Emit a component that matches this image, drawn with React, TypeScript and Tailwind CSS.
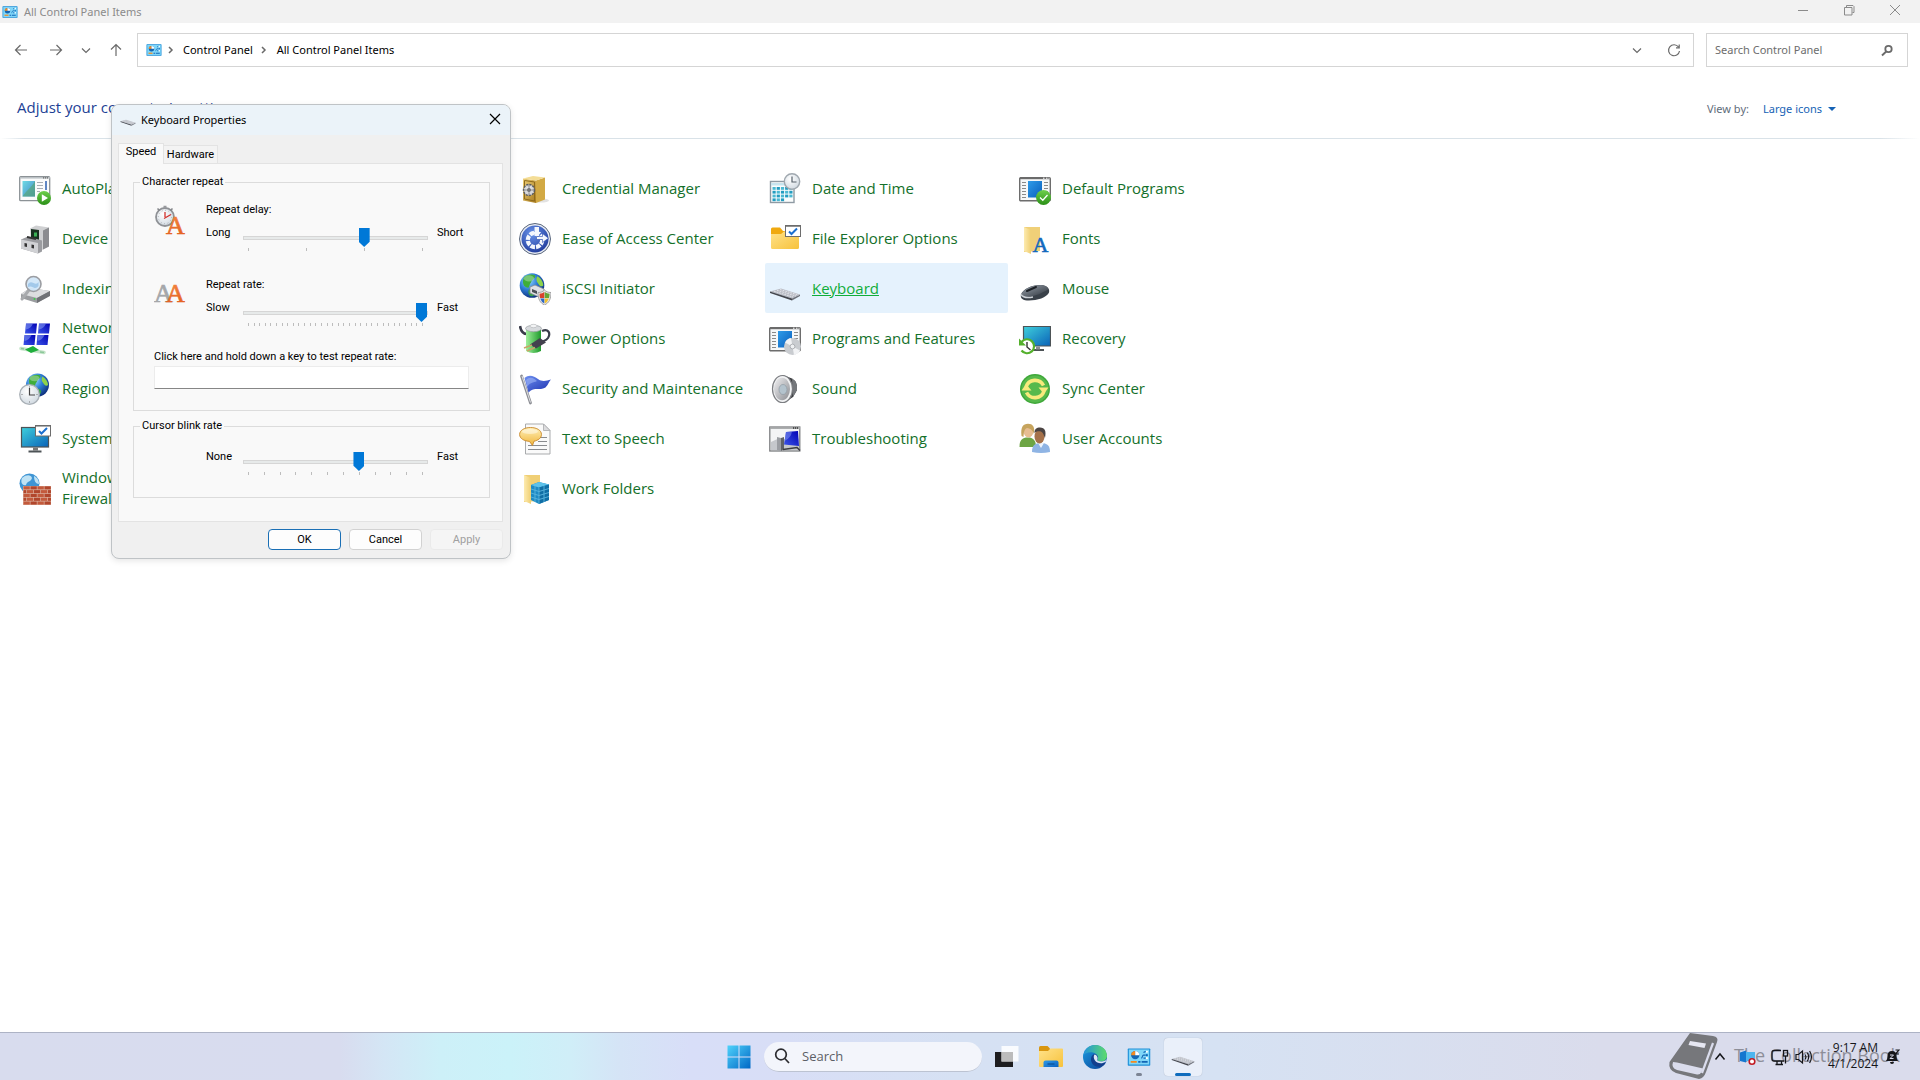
import React, { useState } from "react";

const UI = "font-['Open_Sans','Noto_Sans',sans-serif]";
const SMALL = "font-['Noto_Sans','Open_Sans',sans-serif] text-[11px] leading-4";
const DLG = "font-[Roboto,'Liberation_Sans',sans-serif]";

/* ---------- shared gradients ---------- */

function Gradients() {
  const linear: [string, string, string, string, string, string, string][] = [
    ["gScreen", "0", "0", "1", "1", "#3fd0dc", "#0a62b8"],
    ["gBlueWin", "0", "0", "1", "1", "#2f9be8", "#0a5fbe"],
    ["gGreen", "0", "0", "0", "1", "#6fd04c", "#2a8f17"],
    ["gFolder", "0", "0", "1", "1", "#ffe28a", "#f7c23c"],
    ["gPale", "0", "0", "1", "0", "#fdebb0", "#efcf74"],
    ["gFlag", "0", "0", "1", "1", "#6d8ff0", "#1a2fae"],
    ["gMon", "0", "1", "1", "0", "#3b55e8", "#0000b4"],
    ["gGray", "0", "0", "1", "1", "#f0f0f2", "#8c8d92"],
    ["gDark", "0", "0", "1", "1", "#9ba4ae", "#2d333b"],
    ["gGold", "0", "0", "1", "1", "#eed07a", "#a87a1c"],
    ["gBattery", "0", "0", "1", "0", "#9ff09a", "#1f9a2c"],
    ["gStart", "0", "0", "1", "1", "#4fd2fb", "#0067c5"],
    ["gEdgeA", "0", "0", "1", "0", "#2393dc", "#5ddc6a"],
    ["gEdgeB", "0", "0", "1", "1", "#1b9de2", "#0b3f94"],
    ["gBubble", "0", "0", "0", "1", "#fff0b8", "#f0b53a"],
    ["gOrange", "0", "0", "0", "1", "#f58a45", "#e0591a"],
  ];
  return (
    <svg width="0" height="0" className="absolute" aria-hidden="true">
      <defs>
        {linear.map(([id, x1, y1, x2, y2, a, b]) => (
          <linearGradient key={id} id={id} x1={x1} y1={y1} x2={x2} y2={y2}>
            <stop offset="0" stopColor={a} />
            <stop offset="1" stopColor={b} />
          </linearGradient>
        ))}
        <radialGradient id="gGlobe" cx=".35" cy=".3" r=".8">
          <stop offset="0" stopColor="#9fe0ff" />
          <stop offset=".45" stopColor="#2f7fd8" />
          <stop offset="1" stopColor="#08246e" />
        </radialGradient>
        <radialGradient id="gEase" cx=".4" cy=".3" r=".8">
          <stop offset="0" stopColor="#6a94ea" />
          <stop offset="1" stopColor="#1b3596" />
        </radialGradient>
        <radialGradient id="gClock" cx=".4" cy=".35" r=".7">
          <stop offset="0" stopColor="#ffffff" />
          <stop offset="1" stopColor="#cfd8e0" />
        </radialGradient>
      </defs>
    </svg>
  );
}

function Icon({ children }: { children: React.ReactNode }) {
  return (
    <svg viewBox="0 0 32 32" className="mt-0.5 size-8 shrink-0" aria-hidden="true">
      {children}
    </svg>
  );
}

function Globe({ cx, cy, r }: { cx: number; cy: number; r: number }) {
  return (
    <g transform={`translate(${cx} ${cy}) scale(${r / 12})`}>
      <circle r="12" fill="url(#gGlobe)" />
      <path d="M-8 -8 C-5 -11 0 -11.500 3 -10 C4 -7 0 -6 -1 -3 C-3 -1 -2 3 -5 2 C-8 1 -10 -2 -8 -8Z" fill="#3fae3a" />
      <path d="M5 -9 C9 -7 11 -3 11 0 C9 2 7 0 6 -2 C4 -4 4 -7 5 -9Z" fill="#8ed24a" />
      <path d="M-3 4 C0 3 4 4 4 7 C3 10 0 11 -2 10 C-4 8 -4 6 -3 4Z" fill="#36a04a" />
      <ellipse cx="-3" cy="-7" rx="5" ry="3" fill="#fff" opacity=".3" />
    </g>
  );
}

function ProgramWindow() {
  return (
    <g>
      <rect x=".7" y="4.700" width="30.600" height="23" rx="1" fill="#f6f7f8" stroke="#6d6d6d" strokeWidth="1.400" />
      <path d="M1 5.200H31" stroke="#6b6b6b" strokeWidth="2" />
      <path d="M24 5.200h1.500M27 5.200h1.500M29.500 5.200h1" stroke="#fff" strokeWidth="1" />
      <path d="M3 9.500h4M3 12.500h4M3 15.500h4M3 18.500h4M3 21.500h4M3 24.500h4M25 9.500h4M25 12.500h4M25 15.500h4M25 18.500h4" stroke="#8a8a8a" strokeWidth="1.100" />
      <rect x="9" y="8" width="14" height="16.500" fill="url(#gBlueWin)" />
    </g>
  );
}

const keyboardShape = (
  <g transform="translate(0 1)">
    <path d="M1 17.500 L12 14.500 L31 20.500 L23 24.500 Z" fill="#b9bcc4" />
    <path d="M1 17.500 L23 24.500 L23 26.500 L1 19Z" fill="#44464d" />
    <path d="M23 24.500 L31 20.500 L31 22 L23 26.500Z" fill="#6f727a" />
    <path d="M5 17.200L24 23M8 16.300L27 22M11 15.500L29.500 21" stroke="#e6e8ed" strokeWidth=".9" strokeDasharray="1.800 .9" />
  </g>
);

const controlPanelShape = (
  <g>
    <rect x="1" y="4.500" width="30" height="23" rx="1" fill="#1e8fd8" />
    <rect x="2.500" y="6" width="27" height="20" fill="#7fd6f8" />
    <circle cx="11" cy="13.500" r="5.500" fill="#1266b5" />
    <path d="M11 13.500V8a5.500 5.500 0 0 0-5.500 5.500Z" fill="#f58b1f" />
    <path d="M11 13.500V8a5.500 5.500 0 0 1 5.500 5.500Z" fill="#fff" />
    <path d="M19 17.500c2 0 1-4 3-4M22 10l3-1.500M22 13.500h3M22 17.500h3" stroke="#1266b5" strokeWidth="1.500" fill="none" />
    <circle cx="26.500" cy="9" r="1.400" fill="#fff" />
    <circle cx="26.500" cy="13.500" r="1.400" fill="#1266b5" />
    <circle cx="26.500" cy="17.500" r="1.400" fill="#fff" />
    <path d="M5 22.500h8" stroke="#f58b1f" strokeWidth="2.400" />
    <path d="M15 22.500h3M19.500 22.500h8" stroke="#1266b5" strokeWidth="2.400" />
  </g>
);

const icons: Record<string, React.ReactNode> = {
  AutoPlay: (
    <g transform="translate(0 3)">
      <rect x=".7" y=".7" width="30" height="24" rx="1" fill="#fafbfb" stroke="#8c9296" strokeWidth="1.300" />
      <path d="M1 1.800h30" stroke="#b9bfc3" strokeWidth="1.500" />
      <path d="M24 1.800h5" stroke="#666" strokeDasharray="1.200 .8" strokeWidth="1.300" />
      <rect x="3.500" y="5" width="12.500" height="15.500" fill="url(#gScreen)" opacity=".75" />
      <path d="M3.500 20.500 C8 14 12 12 16 5V20.500Z" fill="#57a77b" opacity=".7" />
      <path d="M18 6.500h6M18 9.500h6M18 12.500h6M18 15.500h3" stroke="#a7adb2" strokeWidth="1.100" />
      <path d="M27 5v9" stroke="#2b5fb0" strokeWidth="1.500" />
      <circle cx="25" cy="22" r="7" fill="url(#gGreen)" />
      <path d="M22.800 18.200L29 22L22.800 25.800Z" fill="#fff" />
    </g>
  ),
  Device: (
    <g transform="translate(0 1.500)">
      <path d="M11 4L17 1L30 3V22L22 26L12 15Z" fill="#cfd0d2" />
      <path d="M24 6L30 3V22L24 25Z" fill="#8b8c90" />
      <path d="M12 4.500L20 5.500V15.500L12 14Z" fill="#17301f" />
      <path d="M15 8h3v4h-3z" fill="#38b254" />
      <path d="M2 15L9 12L23 16V27L19 29L2 24Z" fill="#9b9ca0" />
      <path d="M2 15L19 18.500V29L2 24Z" fill="#d0d1d4" />
      <path d="M8 12.500L17 14.500" stroke="#333" strokeWidth="2" />
      <path d="M5.500 18.500v3.500l2.500 .6v-3.500zM12.500 20v3.500l2.500 .6v-3.500z" fill="#333" />
    </g>
  ),
  Indexing: (
    <g transform="translate(0 2)">
      <path d="M2 19L11 13L31 16L30 21L18 28L2 23Z" fill="#9a9c9f" />
      <path d="M2 19L11 13L31 16L18 23Z" fill="#dcdddf" />
      <path d="M18 23L31 16V21L18 28Z" fill="#707276" />
      <circle cx="15.500" cy="24" r="1" fill="#38d048" />
      <path d="M10 15L3 24" stroke="#a8aaad" strokeWidth="3" strokeLinecap="round" />
      <circle cx="14.500" cy="9" r="7.500" fill="#cfe6f8" fillOpacity=".9" stroke="#9b9da2" strokeWidth="1.600" />
      <path d="M9 9q2-3 5.500-1t5-1v4q-2 3-5 1.500T9 12Z" fill="#8ebce4" opacity=".7" />
    </g>
  ),
  Network: (
    <g transform="translate(0 .5)">
      {[[6, 0], [19, 0], [4.5, 11.5], [17.5, 11.5]].map(([x, y]) => (
        <g key={`${x}-${y}`}>
          <path d={`M${x + 1} ${y}h11l-1 10h-11z`} fill="url(#gMon)" />
          <path d={`M${x + 1} ${y + 6}q5-1 7-6h-7z`} fill="#8aa0f4" opacity=".55" />
        </g>
      ))}
      <path d="M2 25L25 29" stroke="#c4e4c8" strokeWidth="3.500" strokeLinecap="round" />
      <path d="M6 26L14 22.500L20 26.500L12 29.500Z" fill="#1fae3c" />
      <path d="M2 25l3 .6M21 28.400l4 .7" stroke="#8cc79a" strokeWidth="1.500" />
    </g>
  ),
  Region: (
    <g>
      <Globe cx={18.5} cy={12} r={11.5} />
      <circle cx="10.500" cy="21.500" r="9.800" fill="url(#gClock)" stroke="#a9b0b6" strokeWidth="1.300" />
      <path d="M10.500 15V22H16" stroke="#444" strokeWidth="1.200" fill="none" />
      <path d="M10.500 13.500v1M10.500 28.500v1M2.500 21.500h1M17.500 21.500h1" stroke="#777" />
    </g>
  ),
  System: (
    <g>
      <rect x="2.500" y="4.500" width="27" height="19.500" fill="url(#gScreen)" stroke="#4d5356" strokeWidth="1.200" />
      <path d="M14 24.500h5v3h-5z" fill="#777" />
      <path d="M9.500 28.500h13" stroke="#4d5356" strokeWidth="2" />
      <rect x="16.500" y="2.500" width="15" height="10.500" fill="#fff" stroke="#6d6d6d" />
      <path d="M16 2.800h16" stroke="#6d6d6d" strokeWidth="1.500" />
      <path d="M20 8L22.500 10.500L28 5" stroke="#1b6fd0" strokeWidth="2" fill="none" />
    </g>
  ),
  Firewall: (
    <g>
      <circle cx="10.500" cy="10.500" r="10" fill="#3f95d4" />
      <path d="M3 5C8 1 12 2 13 5C12 9 8 8 7 12C4 13 1 10 3 5ZM15 3C19 5 20 8 20 11C17 11 15 8 15 3Z" fill="#bfe2f4" />
      <rect x="4" y="13" width="28" height="19" fill="#ddb2a0" />
      {[0, 1, 2, 3, 4].map((r) =>
        [0, 1, 2, 3, 4].map((c) => {
          const x = 4.5 + c * 7 - (r % 2) * 3.5;
          const a = Math.max(4.5, x);
          const b = Math.min(32, x + 6.3);
          return b > a ? <rect key={`${r}${c}`} x={a} y={13.3 + r * 3.8} width={b - a} height="3.100" fill={(r + c) % 2 ? "#b1462c" : "#c35a3c"} /> : null;
        }),
      )}
    </g>
  ),
  Credential: (
    <g transform="translate(0 2.500)">
      <ellipse cx="22" cy="25" rx="8" ry="2" fill="#e2e2e2" />
      <path d="M4 3L17 5V27.500L4 25Z" fill="url(#gGold)" />
      <path d="M17 5L26 2V24L17 27.500Z" fill="#d2a944" />
      <path d="M4 3L14 .5L26 2L17 5Z" fill="#f4dd96" />
      <path d="M5.500 5L15.500 6.500V25.500L5.500 23.500Z" fill="none" stroke="#8e6a1c" />
      <circle cx="10" cy="14.500" r="5.500" fill="#d7d8dc" stroke="#595b60" strokeWidth="1.400" strokeDasharray="2.200 1" />
      <circle cx="10" cy="14.500" r="2.600" fill="#77797f" stroke="#fff" strokeWidth=".8" />
      <path d="M10 9v11M4.500 14.500h11" stroke="#777" strokeWidth=".8" />
    </g>
  ),
  Ease: (
    <g>
      <circle cx="16" cy="16" r="15.500" fill="#e8ecf4" stroke="#59667c" strokeWidth="1" />
      <circle cx="16" cy="16" r="13.500" fill="url(#gEase)" />
      <circle cx="16" cy="17" r="7.200" fill="none" stroke="#f4f7fd" strokeWidth="4.200" strokeDasharray="4.500 1.150" />
      <path d="M15.500 4h4.500v9h-4.500z" fill="#f4f7fd" />
      <path d="M13.500 9L17.800 14L22 9Z" fill="#f4f7fd" />
      <path d="M17.500 13.500h6v-3l6 4.700-6 4.300v-3h-6z" fill="#f4f7fd" stroke="#2c4db0" strokeWidth=".6" />
    </g>
  ),
  iSCSI: (
    <g>
      <Globe cx={13} cy={12.5} r={12.3} />
      <path d="M11 14L16 12L25 16V23L20 24L11 20Z" fill="#dfe1e5" stroke="#888b92" strokeWidth=".8" />
      <path d="M13 16l5 2v3l-5-2z" fill="#4c5058" />
      <path d="M19 19.500C22 19.500 24 18.500 25.500 17C27 18.500 29 19.500 32 19.500C32 26 30 30 25.500 32C21 30 19 26 19 19.500Z" fill="#e8e8ea" stroke="#888" strokeWidth=".7" />
      <path d="M20.500 20.800Q23.500 20.500 25.300 19V25H21Q20.500 23 20.500 20.800Z" fill="#d9422c" />
      <path d="M25.700 19Q28 20.700 30.600 20.800Q30.500 23 30 25H25.700Z" fill="#63a636" />
      <path d="M21.200 25.400H25.300V30.500Q22.500 29 21.200 25.400Z" fill="#2e67c6" />
      <path d="M25.700 25.400H29.900Q28.500 29 25.700 30.500Z" fill="#f1c02c" />
    </g>
  ),
  Power: (
    <g>
      <path d="M1 3C2 9 4 11 8 11" stroke="#3a3d4a" strokeWidth="2.600" fill="none" />
      <path d="M23 8C29 5 32 10 29 15C27 18 23 18 21 20" stroke="#3a3d4a" strokeWidth="2.200" fill="none" />
      <path d="M7 6Q14.500 10 22 6V28Q14.500 32 7 28Z" fill="url(#gBattery)" />
      <ellipse cx="14.500" cy="5.500" rx="8" ry="3.200" fill="#d7dadd" stroke="#9a9da2" strokeWidth=".7" />
      <ellipse cx="14.500" cy="3" rx="3.500" ry="1.700" fill="#f3f4f5" stroke="#a5a7ab" strokeWidth=".5" />
      <path d="M11 21.500L21 15L27 19.500L17 25.500Z" fill="#43414e" />
      <path d="M13 22L5 25M16 24.500L8 28" stroke="#c9a468" strokeWidth="1.700" />
    </g>
  ),
  Security: (
    <g>
      <path d="M2.500 3L11.500 30" stroke="#8b8d93" strokeWidth="2.800" strokeLinecap="round" />
      <path d="M3 3L11.500 29.500" stroke="#e0e1e4" strokeWidth="1" />
      <path d="M5.500 5C10 1 15 3 19 6C23 9 27 8 32 6.500C29 10 28 15 24 15.500C19 17 15 14 9.500 19.500Z" fill="url(#gFlag)" />
      <path d="M7 7C11 3 15 5 18 8C14 10 11 9 8 14Z" fill="#a6bbf8" opacity=".55" />
    </g>
  ),
  Speech: (
    <g>
      <path d="M6.500 1H24.500L31 7.500V31H6.500Z" fill="#fafafa" stroke="#a9abad" strokeWidth="1" />
      <path d="M24.500 1V7.500H31Z" fill="#dcdcde" stroke="#a9abad" strokeWidth=".8" />
      <path d="M19 14.500h9M19 18.500h9M9 22.500h19M9 26.500h19" stroke="#8a8c8f" strokeWidth="1.100" />
      <path d="M11.500 4.500C18 4.500 22.500 7.500 22.500 11.500C22.500 15 19 17.500 15 18.200L13.500 22.500L10.500 18.400C5 18 .6 15.500 .6 11.500C.6 7.500 5 4.500 11.500 4.500Z" fill="url(#gBubble)" stroke="#c8882a" strokeWidth=".9" />
      <ellipse cx="11" cy="8.500" rx="8" ry="2.500" fill="#fff" opacity=".45" />
    </g>
  ),
  Work: (
    <g>
      <path d="M5 2H21V28L5 29Z" fill="#f0cf75" />
      <path d="M5 2L12 5V31L5 28Z" fill="url(#gPale)" />
      <path d="M12 12L20 9L30 11.500V27L20 31L12 27Z" fill="#1d8ac4" />
      <path d="M12 12L20 9L30 11.500L20 14.500Z" fill="#5cc1ea" />
      <path d="M20 14.500L30 11.500V27L20 31Z" fill="#106ea5" />
      <path d="M12 16l8 2.500l10-3M12 20l8 2.500l10-3M12 24l8 2.500l10-3M16 13v16M25 13v16M20 14.500V31" stroke="#5ab4de" strokeWidth=".9" fill="none" />
    </g>
  ),
  Date: (
    <g>
      <rect x="1.500" y="8.500" width="23.500" height="21" fill="#fbfdfd" stroke="#8f9aa3" strokeWidth="1.400" />
      <path d="M2 10h22.500v2.500h-22.500z" fill="#c8e4ee" />
      {[0, 1, 2, 3].map((r) =>
        [0, 1, 2, 3, 4].map((c) =>
          r === 3 && c > 2 ? null : <rect key={`${r}${c}`} x={3.5 + c * 4.2} y={14 + r * 3.8} width="3.200" height="2.800" fill={(r + c) % 2 ? "#239cc0" : "#4bb9d3"} />,
        ),
      )}
      <circle cx="23" cy="8.500" r="7.700" fill="url(#gClock)" stroke="#a0a8af" strokeWidth="1.400" />
      <path d="M23 3.500V9H27.500" stroke="#56606a" strokeWidth="1.200" fill="none" />
    </g>
  ),
  Folder: (
    <g>
      <path d="M2 6Q2 4.500 3.500 4.500H11L14 8H30V14H2Z" fill="#f0a90f" />
      <path d="M2 11H12L15 8.500H30V24.500Q30 26 28.500 26H3.500Q2 26 2 24.500Z" fill="url(#gFolder)" />
      <rect x="16.500" y="2.500" width="15" height="11" fill="#fff" stroke="#6d6d6d" />
      <path d="M16 3h16" stroke="#6d6d6d" strokeWidth="1.500" />
      <path d="M20 8.500L22.500 11L28 5.500" stroke="#1b6fd0" strokeWidth="2" fill="none" />
    </g>
  ),
  Keyboard: keyboardShape,
  Programs: (
    <g>
      <ProgramWindow />
      <circle cx="23.500" cy="23.500" r="8.500" fill="#c9ccd0" />
      <path d="M23.500 23.500L16 19.500A8.500 8.500 0 0 1 22 15.100ZM23.500 23.500L31 27.500A8.500 8.500 0 0 1 25 31.900Z" fill="#f2f3f5" />
      <circle cx="23.500" cy="23.500" r="2.400" fill="#eef0f2" stroke="#9fa2a7" strokeWidth=".8" />
    </g>
  ),
  Sound: (
    <g>
      <path d="M14 2L23 5.500Q29 9 28 17L24 24L15 30Z" fill="#3c3e41" />
      <path d="M23 5.500Q29 9 28 17L24 24Z" fill="#74777b" />
      <ellipse cx="13.500" cy="16" rx="10" ry="13.500" fill="#f1f2f3" stroke="#7c7e82" strokeWidth="1.200" />
      <ellipse cx="13" cy="16" rx="8" ry="11.300" fill="url(#gGray)" />
      <ellipse cx="14" cy="16.500" rx="4" ry="5" fill="#b4c3cd" stroke="#8f9ba4" strokeWidth=".7" />
    </g>
  ),
  Trouble: (
    <g transform="translate(0 1)">
      <rect x=".8" y="3" width="30" height="24" fill="#f3f4f5" stroke="#7c7e80" strokeWidth="1.300" />
      <path d="M1 4h30" stroke="#a4a6a8" strokeWidth="1.800" />
      <path d="M24 4h5" stroke="#333" strokeDasharray="1.200 .8" strokeWidth="1.300" />
      <path d="M2 18Q15 10 30 22V26H2Z" fill="#c5c8cc" />
      <path d="M8 13l4 1v13l-4-1z" fill="#9b9ea3" />
      <path d="M12 14l3-1v12l-3 2z" fill="#5f6267" />
      <path d="M17 8L29 7L30 22L15 20.500Z" fill="url(#gMon)" />
      <path d="M17 8L23 7.500Q22 14 15.500 17Z" fill="#8aa0f4" opacity=".5" />
      <path d="M14 25.500L28 23.500L31 26.500" stroke="#3b3d40" strokeWidth="1.500" fill="none" />
    </g>
  ),
  Default: (
    <g>
      <ProgramWindow />
      <circle cx="24.500" cy="24.500" r="7.500" fill="url(#gGreen)" />
      <path d="M21 24.500L23.800 27.200L28.500 22" stroke="#fff" strokeWidth="1.300" fill="none" />
    </g>
  ),
  Fonts: (
    <g>
      <path d="M5 4H21V28L5 29Z" fill="#f0d078" />
      <path d="M5 4L12 7V31L5 28Z" fill="url(#gPale)" />
      <text x="13.500" y="29" fontFamily="Liberation Serif, serif" fontWeight="400" fontSize="22" fill="#1369bd" stroke="#1369bd" strokeWidth=".6">A</text>
    </g>
  ),
  Mouse: (
    <g transform="translate(0 3.500)">
      <path d="M2 18C4 12 14 8 22 8.500C28 9 31 12 30 16C28 21 18 24 10 24C4 24 1 22 2 18Z" fill="#3a4149" />
      <path d="M3 16.500C6 11.500 14 8.500 22 8.500C27 9 29.500 11 29 13C24 16 16 20 10 20C5 20 2 19 3 16.500Z" fill="url(#gDark)" />
      <path d="M8 14.500L17 10.500" stroke="#1c2126" strokeWidth="2" strokeLinecap="round" />
      <path d="M2 18C4 21 9 21.500 14 20.500" stroke="#cdd2d8" strokeWidth="1.500" fill="none" />
    </g>
  ),
  Recovery: (
    <g transform="translate(0 2)">
      <path d="M4.500 1.500h27v19.500h-27z" fill="url(#gScreen)" stroke="#4d5356" strokeWidth="1.200" />
      <path d="M14 25h11" stroke="#4d5356" strokeWidth="2" />
      <path d="M17 21.500h4v3h-4z" fill="#8a8d90" />
      <circle cx="8" cy="21.500" r="7" fill="#fff" />
      <path d="M2.500 17A7 7 0 1 1 2.500 25.500" stroke="#54b02c" strokeWidth="2.200" fill="none" />
      <path d="M0 13.500V20.500H7Z" fill="#54b02c" />
      <path d="M8 17V22L11.500 25" stroke="#333" strokeWidth="1.400" fill="none" />
    </g>
  ),
  Sync: (
    <g>
      <circle cx="16" cy="16" r="15" fill="#3fa83a" />
      <circle cx="16" cy="16" r="13.500" fill="#56b94c" />
      <path d="M7 14A9.500 9.500 0 0 1 24.500 12.500" stroke="#f7ea7c" strokeWidth="3.600" fill="none" />
      <path d="M19.500 14.500H29.500L25 21Z" fill="#f7ea7c" />
      <path d="M25 18A9.500 9.500 0 0 1 7.500 19.500" stroke="#f7ea7c" strokeWidth="3.600" fill="none" />
      <path d="M12.500 17.500H2.500L7 11Z" fill="#f7ea7c" />
    </g>
  ),
  Users: (
    <g>
      <path d="M.5 24C.5 17 3 14.500 9 14.500C14 14.500 17 17 17 24Z" fill="#6da544" />
      <ellipse cx="9.500" cy="8.500" rx="4.800" ry="6" fill="#e7bd92" />
      <path d="M2.500 13C1.500 4 4 .8 9 .8C14 .8 16 4 15 11C14 8 12 5.500 8 5C5 6.500 5 9 4.500 14Z" fill="#c6a45e" />
      <path d="M13 29C13 22 16 20 22 20C28 20 31 22.500 31 29Q22 31 13 29Z" fill="#8fb4e4" />
      <path d="M19 20l3 5l3-5z" fill="#eef4fc" />
      <ellipse cx="20.500" cy="13.500" rx="5" ry="7" fill="#a5714a" />
      <path d="M15.500 10C15.500 6 17.500 4.500 21 4.500C26 4.500 27.500 8 26 15C25 13 24.500 10 22 8.500C19 8 17 8.500 15.500 10Z" fill="#4b4443" />
    </g>
  ),
};

/* ---------- control panel items ---------- */

type Item = { icon: string; label: string; hot?: boolean };
const columns: Item[][] = [
  [
    { icon: "AutoPlay", label: "AutoPlay" },
    { icon: "Device", label: "Device Manager" },
    { icon: "Indexing", label: "Indexing Options" },
    { icon: "Network", label: "Network and Sharing Center" },
    { icon: "Region", label: "Region" },
    { icon: "System", label: "System" },
    { icon: "Firewall", label: "Windows Defender Firewall" },
  ],
  [],
  [
    { icon: "Credential", label: "Credential Manager" },
    { icon: "Ease", label: "Ease of Access Center" },
    { icon: "iSCSI", label: "iSCSI Initiator" },
    { icon: "Power", label: "Power Options" },
    { icon: "Security", label: "Security and Maintenance" },
    { icon: "Speech", label: "Text to Speech" },
    { icon: "Work", label: "Work Folders" },
  ],
  [
    { icon: "Date", label: "Date and Time" },
    { icon: "Folder", label: "File Explorer Options" },
    { icon: "Keyboard", label: "Keyboard", hot: true },
    { icon: "Programs", label: "Programs and Features" },
    { icon: "Sound", label: "Sound" },
    { icon: "Trouble", label: "Troubleshooting" },
  ],
  [
    { icon: "Default", label: "Default Programs" },
    { icon: "Fonts", label: "Fonts" },
    { icon: "Mouse", label: "Mouse" },
    { icon: "Recovery", label: "Recovery" },
    { icon: "Sync", label: "Sync Center" },
    { icon: "Users", label: "User Accounts" },
  ],
];

function PanelItem({ icon, label, hot }: Item) {
  return (
    <li className={hot ? "mr-[7px] flex h-[50px] items-center gap-[11px] rounded-xs bg-[#e5f2fd] px-1" : "mr-[7px] flex h-[50px] items-center gap-[11px] px-1"}>
      <Icon>{icons[icon]}</Icon>
      <a href="#" className={hot ? "text-[15px] leading-[21px] text-[#10ad3a] underline" : "max-w-[186px] text-[15px] leading-[21px] text-[#14702a]"}>
        {label}
      </a>
    </li>
  );
}

/* ---------- window chrome ---------- */

function Stroke({ d, w = 1.2 }: { d: string; w?: number }) {
  return (
    <svg viewBox="0 0 16 16" className="size-4 shrink-0" fill="none" stroke="currentColor" strokeWidth={w} aria-hidden="true">
      <path d={d} />
    </svg>
  );
}

function ControlPanelGlyph({ large }: { large?: boolean }) {
  return (
    <svg viewBox="0 0 32 32" className={large ? "size-6 shrink-0" : "size-4 shrink-0"} aria-hidden="true">
      {controlPanelShape}
    </svg>
  );
}

function TitleBar() {
  return (
    <header className="flex h-[23px] items-center bg-[#f2f2f2] pr-0.5 pl-0.5 text-[#8b8b8b]">
      <ControlPanelGlyph />
      <h1 className={`ml-1.5 flex-1 ${SMALL}`}>All Control Panel Items</h1>
      <div className="flex h-5 items-start">
        <button aria-label="Minimize" className="grid w-[46px] place-items-center">
          <Stroke d="M3 8.500H13" w={1} />
        </button>
        <button aria-label="Restore" className="grid w-[46px] place-items-center">
          <Stroke d="M3.500 5.500h7.500v7.500h-7.500zM5.500 5V3.500h6.500l1 1V10.500h-1.500" w={1} />
        </button>
        <button aria-label="Close" className="grid w-[46px] place-items-center">
          <Stroke d="M3 3L13 13M13 3L3 13" w={1} />
        </button>
      </div>
    </header>
  );
}

function NavBar() {
  return (
    <div className="flex items-center pt-2.5 pr-3 pl-[13px] text-[#6a6a6a]">
      <nav aria-label="History" className="flex w-[124px] shrink-0 items-center">
        <button aria-label="Back" className="mr-[19px]">
          <Stroke d="M7.500 3L2.500 8L7.500 13M2.500 8H14" />
        </button>
        <button aria-label="Forward" className="mr-3.5">
          <Stroke d="M8.500 3L13.500 8L8.500 13M13.500 8H2" />
        </button>
        <button aria-label="Recent locations" className="mr-3.5">
          <Stroke d="M4 6.500L8 10.500L12 6.500" />
        </button>
        <button aria-label="Up">
          <Stroke d="M3 7.500L8 2.500L13 7.500M8 2.500V14" />
        </button>
      </nav>
      <div className="flex h-[34px] flex-1 items-center border border-[#d5d5d5] bg-white pr-[11px] pl-2">
        <ControlPanelGlyph />
        <ol className={`flex flex-1 items-center text-black ${SMALL}`}>
          <li className="flex items-center text-[#6a6a6a]"><Stroke d="M7 5L10 8L7 11" w={1.5} /></li>
          <li className="ml-[5px]"><a href="#">Control Panel</a></li>
          <li className="ml-0.5 flex text-[#6a6a6a]"><Stroke d="M7 5L10 8L7 11" w={1.5} /></li>
          <li className="ml-1.5"><a href="#">All Control Panel Items</a></li>
        </ol>
        <button aria-label="Previous locations" className="mr-[21px]">
          <Stroke d="M4 6.500L8 10.500L12 6.500" />
        </button>
        <button aria-label="Refresh">
          <Stroke d="M12.500 5A5.500 5.500 0 1 0 13.500 9M13.200 2.500V5.800H10" />
        </button>
      </div>
      <label className="ml-3 flex h-[34px] w-[202px] items-center border border-[#d5d5d5] bg-white pr-3 pl-2">
        <input aria-label="Search Control Panel" placeholder="Search Control Panel" className={`min-w-0 flex-1 outline-none placeholder:text-[#6d6d6d] ${SMALL}`} />
        <svg viewBox="0 0 16 16" className="size-4 shrink-0" fill="none" stroke="#6a6a6a" aria-hidden="true">
          <circle cx="9.500" cy="7" r="3.200" strokeWidth="1.800" />
          <path d="M7.200 9.500L3 13.500" strokeWidth="1.900" />
        </svg>
      </label>
    </div>
  );
}

/* ---------- dialog ---------- */

type SliderProps = { name: string; low: string; high: string; steps: number; start: number };

function Slider({ name, low, high, steps, start }: SliderProps) {
  const [value, setValue] = useState(start);
  return (
    <div className="flex">
      <span className="w-[37px] leading-[14px]">{low}</span>
      <div className="w-[185px] pt-0.5">
        <input
          type="range"
          aria-label={name}
          min={0}
          max={steps}
          value={value}
          onChange={(e) => setValue(Number(e.target.value))}
          className="block h-5 w-full appearance-none bg-transparent [&::-webkit-slider-runnable-track]:h-1 [&::-webkit-slider-runnable-track]:border [&::-webkit-slider-runnable-track]:border-[#d6d6d6] [&::-webkit-slider-runnable-track]:bg-[#e7eaea] [&::-webkit-slider-thumb]:-mt-[9px] [&::-webkit-slider-thumb]:h-[19px] [&::-webkit-slider-thumb]:w-[11px] [&::-webkit-slider-thumb]:appearance-none [&::-webkit-slider-thumb]:bg-[#0078d7] [&::-webkit-slider-thumb]:[clip-path:polygon(0_0,100%_0,100%_72%,50%_100%,0_72%)]"
        />
        <div className="flex justify-between px-[5px]" aria-hidden="true">
          {Array.from({ length: steps + 1 }, (_, i) => (
            <span key={i} className="h-[3px] w-px bg-[#bdbdbd]" />
          ))}
        </div>
      </div>
      <span className="ml-[9px] leading-[14px]">{high}</span>
    </div>
  );
}

function KeyboardDialog() {
  const button = "h-[21px] w-[73px] rounded border bg-[#fdfdfd]";
  return (
    <section
      role="dialog"
      aria-label="Keyboard Properties"
      className={`absolute top-[104px] left-[111px] w-[400px] overflow-hidden rounded-lg border border-[#bfc3c6] bg-[#f0f0f0] text-[11px] leading-[14px] text-black shadow-[0_2px_6px_rgba(0,0,0,0.10)] ${DLG}`}
    >
      <header className="flex h-[30px] items-center bg-[#ebf3f9] pr-[7px] pl-2">
        <svg viewBox="0 0 32 32" className="size-4" aria-hidden="true">{keyboardShape}</svg>
        <h2 className={`ml-[5px] flex-1 ${SMALL}`}>Keyboard Properties</h2>
        <button aria-label="Close dialog" className="-mt-0.5"><Stroke d="M3 3L13 13M13 3L3 13" w={1.2} /></button>
      </header>
      <div className="pt-2 pr-[7px] pl-1.5">
        <div role="tablist" className="flex items-end">
          <button role="tab" aria-selected="true" className="relative -mb-px h-[21px] w-[46px] border border-b-0 border-[#e3e3e3] bg-[#f9f9f9] pb-1">Speed</button>
          <button role="tab" aria-selected="false" className="h-[18px] w-[54px] border border-b-0 border-l-0 border-[#e3e3e3] bg-[#f3f3f3]">Hardware</button>
        </div>
        <div role="tabpanel" className="h-[359px] border border-[#e3e3e3] bg-[#f9f9f9] pt-[11px] pr-3 pl-3.5">
          <fieldset className="h-[236px] border border-[#dcdcdc] px-5">
            <legend className="-ml-3.5 px-0.5 leading-[14px]">Character repeat</legend>
            <div className="mt-[14px] flex gap-5">
              <svg viewBox="0 0 32 32" className="mt-0.5 size-8 shrink-0" aria-hidden="true">
                <circle cx="11" cy="12" r="9" fill="url(#gClock)" stroke="#8f9296" strokeWidth="1.800" />
                <path d="M9.500 .8h3v2.500h-3z" fill="#97999d" />
                <path d="M3.500 3.500l2 2M18.500 3.500l-2 2" stroke="#85878b" strokeWidth="1.600" />
                <circle cx="11" cy="12" r="6.700" fill="none" stroke="#9fa2a6" strokeDasharray=".8 2.700" />
                <path d="M10 13.500L17 9.500M11 12V7" stroke="#d2322d" strokeWidth="1.300" />
                <text x="12" y="29" fontFamily="Liberation Serif, serif" fontSize="26" fill="url(#gOrange)" stroke="url(#gOrange)" strokeWidth=".7">A</text>
              </svg>
              <div>
                <p className="mb-[9px]">Repeat delay:</p>
                <Slider name="Repeat delay" low="Long" high="Short" steps={3} start={2} />
              </div>
            </div>
            <div className="mt-[27px] flex gap-5">
              <svg viewBox="0 0 32 32" className="mt-0.5 size-8 shrink-0" aria-hidden="true">
                <text x="0" y="22" fontFamily="Liberation Serif, serif" fontSize="26" fill="#a5a7aa" stroke="#a5a7aa" strokeWidth=".7">A</text>
                <text x="12" y="22" fontFamily="Liberation Serif, serif" fontSize="26" fill="url(#gOrange)" stroke="url(#gOrange)" strokeWidth=".7">A</text>
              </svg>
              <div>
                <p className="mb-[9px]">Repeat rate:</p>
                <Slider name="Repeat rate" low="Slow" high="Fast" steps={31} start={31} />
              </div>
            </div>
            <label className="mt-6 block">
              Click here and hold down a key to test repeat rate:
              <input className="mt-0.5 block h-[23px] w-full border border-[#ececec] border-b-[#868686] bg-white px-1 outline-none" />
            </label>
          </fieldset>
          <fieldset className="mt-2 h-[79px] border border-[#dcdcdc] pl-[72px]">
            <legend className="-ml-[66px] px-0.5 leading-[14px]">Cursor blink rate</legend>
            <div className="mt-[17px]">
              <Slider name="Cursor blink rate" low="None" high="Fast" steps={11} start={7} />
            </div>
          </fieldset>
        </div>
      </div>
      <footer className="flex justify-end gap-2 pt-[7px] pr-[7px] pb-2">
        <button className={`${button} border-[#1a6fb5]`}>OK</button>
        <button className={`${button} border-[#d2d2d2]`}>Cancel</button>
        <button disabled className="h-[21px] w-[73px] rounded border border-[#eaeaea] bg-[#f5f5f5] text-[#a0a0a0]">Apply</button>
      </footer>
    </section>
  );
}

/* ---------- taskbar ---------- */

function Slot({ label, children }: { label: string; children: React.ReactNode }) {
  return (
    <button aria-label={label} className="relative grid h-[47px] w-11 place-items-center">
      {children}
    </button>
  );
}

function Taskbar() {
  return (
    <footer className="relative grid h-12 grid-cols-[1fr_auto_1fr] border-t border-[#adb3c5] bg-[linear-gradient(90deg,#d8dcee_0px,#d8dcef_340px,#d4e6f5_385px,#cdf0f8_440px,#cbf2f9_510px,#d0eef8_570px,#d5e4f6_620px,#d8def8_690px,#d8def6_780px,#d6e1f3_960px,#d6e2f3_1220px,#dadcec_1600px,#dadcec_100%)]">
      <div />
      <div className="flex items-center pl-0.5">
        <Slot label="Start">
          <svg viewBox="0 0 24 24" className="size-6" aria-hidden="true">
            <path d="M.5 .5h11v11H.5zM12.500 .5h11v11h-11zM.5 12.500h11v11H.5zM12.500 12.500h11v11h-11z" fill="url(#gStart)" />
          </svg>
        </Slot>
        <label className="mx-[3px] flex h-[30px] w-[218px] items-center gap-3 rounded-full border-b border-[#bcc3d2] bg-[#f3f5fb] px-2.5">
          <svg viewBox="0 0 16 16" className="size-4 shrink-0" fill="none" stroke="#2c2c30" strokeWidth="1.700" aria-hidden="true">
            <circle cx="7" cy="6.500" r="5.300" />
            <path d="M10.800 10.500L15 15" />
          </svg>
          <input aria-label="Search" placeholder="Search" className="min-w-0 flex-1 text-[13px] leading-5 outline-none placeholder:text-[#5c5f66]" />
        </label>
        <Slot label="Task view">
          <svg viewBox="0 0 24 24" className="size-6" aria-hidden="true">
            <rect x="0" y="7" width="18" height="15" fill="#1d1d1f" />
            <rect x="6.500" y="1" width="17" height="15.500" fill="#fff" opacity=".85" />
            <rect x="6.500" y="7" width="11.500" height="9.500" fill="#bcbcbc" />
          </svg>
        </Slot>
        <Slot label="File Explorer">
          <svg viewBox="0 0 24 24" className="size-6" aria-hidden="true">
            <path d="M0 2.500Q0 1 1.500 1H8.500L11 3.500V7H0Z" fill="#d9960f" />
            <path d="M0 6H9L11.500 3.500H23Q24 3.500 24 4.500V21Q24 22 23 22H1Q0 22 0 21Z" fill="url(#gFolder)" />
            <path d="M4.500 22V17.500Q4.500 15.500 6.500 15.500H17.500Q19.500 15.500 19.500 17.500V22Z" fill="url(#gBlueWin)" />
            <path d="M8.500 19H15.500" stroke="#0b4f96" strokeWidth="1.200" />
          </svg>
        </Slot>
        <Slot label="Microsoft Edge">
          <svg viewBox="0 0 24 24" className="size-6" aria-hidden="true">
            <circle cx="12" cy="12" r="12" fill="url(#gEdgeB)" />
            <path d="M.3 10.500C1.500 4 6.500 0 12 0C19 0 24 5 24 10.800C24 14.500 21 16.500 18 16.500C15.500 16.500 14 15.700 14.300 14.800C15.500 13.500 15.300 8.500 9.800 7.500C5.500 6.800 1.500 8.500 .3 10.500Z" fill="url(#gEdgeA)" />
            <path d="M14.300 14.800C15.500 13 15 9.500 11.500 9C8.500 10 7.300 13.500 8.500 17C9.800 20.500 13.500 22.500 18 21.500C21 20.500 22.500 18.500 22.500 17.500C19 19 13.500 18 14.300 14.800Z" fill="#123f8c" />
            <path d="M14.300 14.800C15.200 13 14.300 10 11.500 9.500C10.300 11 10.600 13.500 12 15.500C14 18.500 19 19.500 23 16.500L24 13.500C23 15.800 20.500 16.600 18 16.500C15.500 16.500 14 15.800 14.300 14.800Z" fill="#dce6f5" />
          </svg>
        </Slot>
        <Slot label="Control Panel">
          <ControlPanelGlyph large />
          <span className="absolute bottom-1 left-[19px] h-[3px] w-1.5 rounded-full bg-[#7c8494]" />
        </Slot>
        <Slot label="Keyboard Properties">
          <span className="grid h-[38px] w-[38px] place-items-center rounded bg-[#eaf0fa] shadow-[0_0_1px_rgba(0,0,0,0.25)]">
            <svg viewBox="0 0 32 32" className="size-6" aria-hidden="true">{keyboardShape}</svg>
          </span>
          <span className="absolute bottom-1 left-3.5 h-[3px] w-4 rounded-full bg-[#0f6cbd]" />
        </Slot>
      </div>
      <div className="relative flex items-center justify-end pr-5 text-[#15161a]">
        <div className="absolute top-0 right-5 flex items-center gap-3.5 text-[#8d8e98]" aria-hidden="true">
          <svg viewBox="0 0 52 47" className="h-[47px] w-[52px]">
            <path d="M22 0L45 3Q51 4 49 9L38 39Q36 45 31 46L8 40Q0 37 1.500 29Z" fill="#76777b" />
            <path d="M5 29Q3 35 9 37L29 41.500Q32 42 33.500 39L35 35.500L9 29.500Z" fill="#dadcec" />
            <path d="M45 10L34 40" stroke="#dadcec" strokeWidth="2.200" />
            <path d="M22 8L38 10.500L36.500 15L20.500 12Z" fill="#e6e7f2" />
          </svg>
          <span className="pb-1 text-[18px] leading-6 whitespace-nowrap">The Collection Book</span>
        </div>
        <button aria-label="Show hidden icons" className="relative mr-[11px]">
          <Stroke d="M3.500 10.500L8 5L12.500 10.500" w={1.5} />
        </button>
        <svg viewBox="0 0 18 18" className="relative mr-3.5 size-[18px]" aria-hidden="true">
          <path d="M1 4.500L7 2.500V14.500L1 13Z" fill="#1577cf" />
          <path d="M7 4h9v9H7z" fill="#4cb5ee" />
          <circle cx="13" cy="13.500" r="2.800" fill="#fff" stroke="#c21c24" strokeWidth="1.600" />
        </svg>
        <svg viewBox="0 0 18 18" className="relative mr-1.5 size-[18px]" fill="none" stroke="currentColor" strokeWidth="1.300" aria-hidden="true">
          <path d="M10 2.500H3Q1 2.500 1 4.500V11Q1 13 3 13H13M4.500 16.500H12M6 13V16.500M10.500 13V16.500M14.500 8V15.500" />
          <rect x="12.500" y="2.500" width="4" height="5.500" />
        </svg>
        <svg viewBox="0 0 18 18" className="relative mr-[15px] size-[18px]" fill="none" stroke="currentColor" strokeWidth="1.200" aria-hidden="true">
          <path d="M1 6.500H3.500L7.500 3V15L3.500 11.500H1ZM10 6.500Q11.800 9 10 11.500M12.300 4.800Q15 9 12.300 13.200M14.600 3Q18.300 9 14.600 15" />
        </svg>
        <time dateTime="2024-04-01T09:17" className="relative mr-1.5 pb-0.5 text-right text-[12px] leading-4">
          9:17 AM
          <br />
          4/1/2024
        </time>
        <svg viewBox="0 0 16 16" className="relative size-4" aria-hidden="true">
          <path d="M2 12Q3.500 10 3.500 7Q3.500 2 8 2Q12.500 2 12.500 7Q12.500 10 14 12ZM6 13H10Q10 15 8 15Q6 15 6 13Z" fill="#15161a" />
          <path d="M11.500 1H15L11.500 5H15" stroke="#15161a" strokeWidth="1.200" fill="none" />
          <path d="M6 6h3.500L6 9.500h3.500" stroke="#dadcec" strokeWidth="1" fill="none" />
        </svg>
      </div>
    </footer>
  );
}

export default function App() {
  return (
    <div className={`relative flex min-h-screen flex-col bg-white ${UI}`}>
      <Gradients />
      <TitleBar />
      <NavBar />
      <main className="flex-1">
        <div className="flex items-center justify-between pt-7 pr-[84px] pb-[19px] pl-[17px]">
          <h2 className="text-[15px] leading-6 text-[#1d3f95]">Adjust your computer's settings</h2>
          <div className={`flex items-center gap-3.5 pt-1 ${SMALL}`}>
            <span className="text-[#5f6c7b]">View by:</span>
            <button className="flex items-center gap-1.5 text-[#1662b5]">
              Large icons
              <span className="h-0 w-0 border-x-4 border-t-4 border-x-transparent border-t-[#1662b5]" />
            </button>
          </div>
        </div>
        <div className="h-px bg-[linear-gradient(90deg,transparent,#d9e2e8_24px,#d9e2e8_calc(100%-40px),transparent)]" />
        <div className="grid grid-cols-[repeat(5,250px)] pt-6 pl-[15px]">
          {columns.map((items, i) => (
            <ul key={i}>
              {items.map((item) => (
                <PanelItem key={item.label} {...item} />
              ))}
            </ul>
          ))}
        </div>
      </main>
      <Taskbar />
      <KeyboardDialog />
    </div>
  );
}
